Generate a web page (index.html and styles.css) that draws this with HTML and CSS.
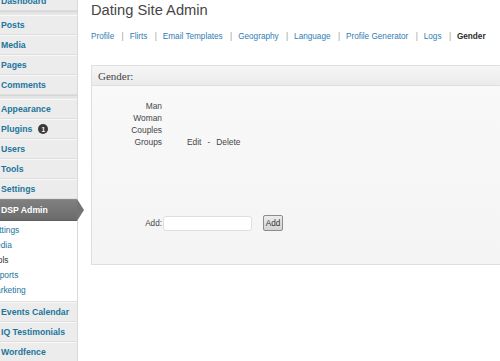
FILE: index.html
```html
<!DOCTYPE html>
<html>
<head>
<meta charset="utf-8">
<title>Dating Site Admin</title>
<link rel="stylesheet" href="styles.css">
</head>
<body>
<div class="layout">
  <nav class="sidebar">
    <ul class="menu">
      <li class="item">Dashboard</li>
      <li class="sep"></li>
      <li class="item">Posts</li>
      <li class="item">Media</li>
      <li class="item">Pages</li>
      <li class="item">Comments</li>
      <li class="sep"></li>
      <li class="item">Appearance</li>
      <li class="item">Plugins <span class="badge">1</span></li>
      <li class="item">Users</li>
      <li class="item">Tools</li>
      <li class="item">Settings</li>
      <li class="item current">DSP Admin</li>
      <li class="submenu">
        <ul>
          <li>Settings</li>
          <li>Media</li>
          <li class="on">Tools</li>
          <li>Reports</li>
          <li>Marketing</li>
        </ul>
      </li>
      <li class="item">Events Calendar</li>
      <li class="item">IQ Testimonials</li>
      <li class="item">Wordfence</li>
    </ul>
  </nav>
  <main class="main">
    <h1 class="title">Dating Site Admin</h1>
    <div class="tabs">
      <a class="tab">Profile</a><span class="bar">|</span>
      <a class="tab">Flirts</a><span class="bar">|</span>
      <a class="tab">Email Templates</a><span class="bar">|</span>
      <a class="tab">Geography</a><span class="bar">|</span>
      <a class="tab">Language</a><span class="bar">|</span>
      <a class="tab">Profile Generator</a><span class="bar">|</span>
      <a class="tab">Logs</a><span class="bar">|</span>
      <span class="tab active">Gender</span>
    </div>
    <section class="panel">
      <h3 class="panel-head">Gender:</h3>
      <div class="panel-body">
        <table class="genders">
          <tr><td class="label">Man</td><td></td></tr>
          <tr><td class="label">Woman</td><td></td></tr>
          <tr><td class="label">Couples</td><td></td></tr>
          <tr><td class="label">Groups</td><td class="actions">Edit<span class="dash">-</span>Delete</td></tr>
        </table>
        <form class="add-row">
          <label class="add-label">Add:</label>
          <input class="add-input" type="text">
          <button class="add-btn" type="button">Add</button>
        </form>
      </div>
    </section>
  </main>
</div>
</body>
</html>
```

FILE: styles.css
```css
html, body {
  margin: 0;
  padding: 0;
  background: #fff;
  overflow: hidden;
}

body {
  font-family: "Liberation Sans", Arial, sans-serif;
  width: 500px;
  height: 361px;
}

.layout {
  display: grid;
  grid-template-columns: 78px 1fr;
  height: 361px;
}

/* Sidebar */
.sidebar {
  background: #ececec;
  border-right: 1px solid #d9d9d9;
  position: relative;
  z-index: 1;
}

.menu {
  list-style: none;
  margin: -9px 0 0;
  padding: 0;
}

.item {
  height: 20px;
  box-sizing: border-box;
  border-top: 1px solid #f8f8f8;
  border-bottom: 1px solid #dedede;
  display: flex;
  align-items: center;
  padding-left: 1px;
  font-size: 8.7px;
  font-weight: bold;
  color: #21759b;
  white-space: nowrap;
}

.sep {
  height: 4px;
  box-sizing: border-box;
  border-top: 1px solid #d6d6d6;
  background: linear-gradient(#e2e2e2, #e9e9e9);
}

.badge {
  display: inline-flex;
  align-items: center;
  justify-content: center;
  width: 10px;
  height: 10px;
  border-radius: 50%;
  background: #3a3a3a;
  color: #fff;
  font-size: 6.5px;
  font-weight: bold;
  margin-left: 6px;
}

.current {
  height: 22px;
  position: relative;
  background: linear-gradient(#808080, #6b6b6b);
  color: #fff;
  border-top: 1px solid #8a8a8a;
  border-bottom: 1px solid #5f5f5f;
}

.current::after {
  content: "";
  position: absolute;
  right: -7px;
  top: -1px;
  border-left: 7px solid #747474;
  border-top: 11px solid transparent;
  border-bottom: 11px solid transparent;
}

.submenu {
  background: #fff;
  padding: 2px 0 3px;
  overflow: hidden;
  border-bottom: 1px solid #dedede;
}

.submenu ul {
  list-style: none;
  margin: 0;
  padding: 0;
}

.submenu li {
  height: 15px;
  line-height: 15px;
  font-size: 8.4px;
  color: #21759b;
  margin-left: -11px;
  white-space: nowrap;
}

.submenu li.on {
  color: #333;
}

/* Main */
.main {
  padding: 1px 0 0 13px;
  overflow: hidden;
  min-width: 0;
}

.title {
  margin: 0;
  font-size: 14.7px;
  line-height: 18px;
  font-weight: normal;
  color: #464646;
}

.tabs {
  display: flex;
  margin-top: 12px;
  font-size: 8.2px;
  line-height: 12px;
  white-space: nowrap;
}

.tab {
  color: #2f7db5;
}

.bar {
  color: #9a9a9a;
  margin: 0 5.9px 0 7.4px;
}

.tab.active {
  color: #2b2b2b;
  font-weight: bold;
}

.panel {
  margin: 22px -20px 0 0;
  border: 1px solid #dfdfdf;
  background: linear-gradient(#f9f9f9, #f4f4f4);
}

.panel-head {
  margin: 0;
  height: 20px;
  box-sizing: border-box;
  padding-left: 6px;
  display: flex;
  align-items: center;
  border-bottom: 1px solid #dfdfdf;
  background: linear-gradient(#f6f6f6, #ebebeb);
  font-family: "Liberation Serif", "Times New Roman", serif;
  font-size: 11px;
  font-weight: normal;
  color: #464646;
}

.panel-body {
  padding: 14px 0 33px;
  font-size: 8.4px;
  color: #464646;
}

.genders {
  border-collapse: collapse;
}

.genders td {
  padding: 0;
  height: 12px;
  line-height: 12px;
}

.genders .label {
  width: 70px;
  text-align: right;
}

.genders .actions {
  padding-left: 25px;
}

.dash {
  margin: 0 6px;
}

.add-row {
  display: flex;
  align-items: center;
  margin: 67px 0 0;
}

.add-label {
  width: 70px;
  text-align: right;
  font-size: 8.2px;
  color: #464646;
}

.add-input {
  margin: 0 0 0 1px;
  width: 89px;
  height: 15px;
  box-sizing: border-box;
  border: 1px solid #dfdfdf;
  border-radius: 3px;
  background: #fff;
  padding: 0 3px;
  font-size: 8px;
}

.add-btn {
  margin-left: 11px;
  width: 20px;
  height: 16px;
  box-sizing: border-box;
  padding: 0;
  border: 1px solid #8c8c8c;
  border-radius: 2px;
  background: linear-gradient(#ececec, #d3d3d3);
  font-family: "Liberation Sans", Arial, sans-serif;
  font-size: 8.2px;
  color: #333;
}
```
